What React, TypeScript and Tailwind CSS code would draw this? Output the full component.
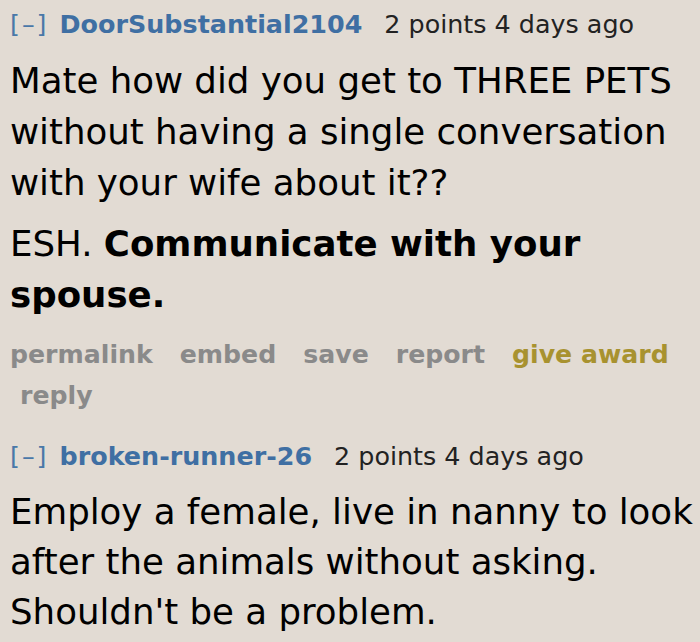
import React from "react";

const font = { fontFamily: '"DejaVu Sans", Verdana, sans-serif' };

function Header({ user }: { user: string }) {
  return (
    <div className="flex items-baseline text-[25.4px] leading-[30px]">
      <span className="text-[#4a78a8] tracking-[2px]">[–]</span>
      <span className="ml-[11px] font-bold text-[#3f6fa3]">{user}</span>
      <span className="ml-[22px] text-[#222]">2 points 4 days ago</span>
    </div>
  );
}

export default function App() {
  return (
    <div style={font} className="w-[700px] h-[642px] overflow-hidden bg-[#e2dbd3] pl-[10px] pt-[9px]">
      <Header user="DoorSubstantial2104" />
      <div className="mt-[16px] w-[700px] text-[35.6px] leading-[51px] text-black">
        <p>Mate how did you get to THREE PETS without having a single conversation with your wife about it??</p>
        <p className="mt-[10px]">
          ESH. <b>Communicate with your spouse.</b>
        </p>
      </div>
      <div className="mt-[14px] flex flex-wrap text-[25.2px] leading-[41px] font-bold text-[#8a8a8a]">
        <span className="mr-[27px]">permalink</span>
        <span className="mr-[27px]">embed</span>
        <span className="mr-[27px]">save</span>
        <span className="mr-[27px]">report</span>
        <span className="text-[#a8922f]">give award</span>
        <span className="ml-[10px]">reply</span>
      </div>
      <div className="mt-[25px]">
        <Header user="broken-runner-26" />
        <div className="mt-[16px] w-[700px] text-[35.6px] leading-[50px] text-black">
          <p>Employ a female, live in nanny to look after the animals without asking. Shouldn't be a problem.</p>
        </div>
      </div>
    </div>
  );
}
